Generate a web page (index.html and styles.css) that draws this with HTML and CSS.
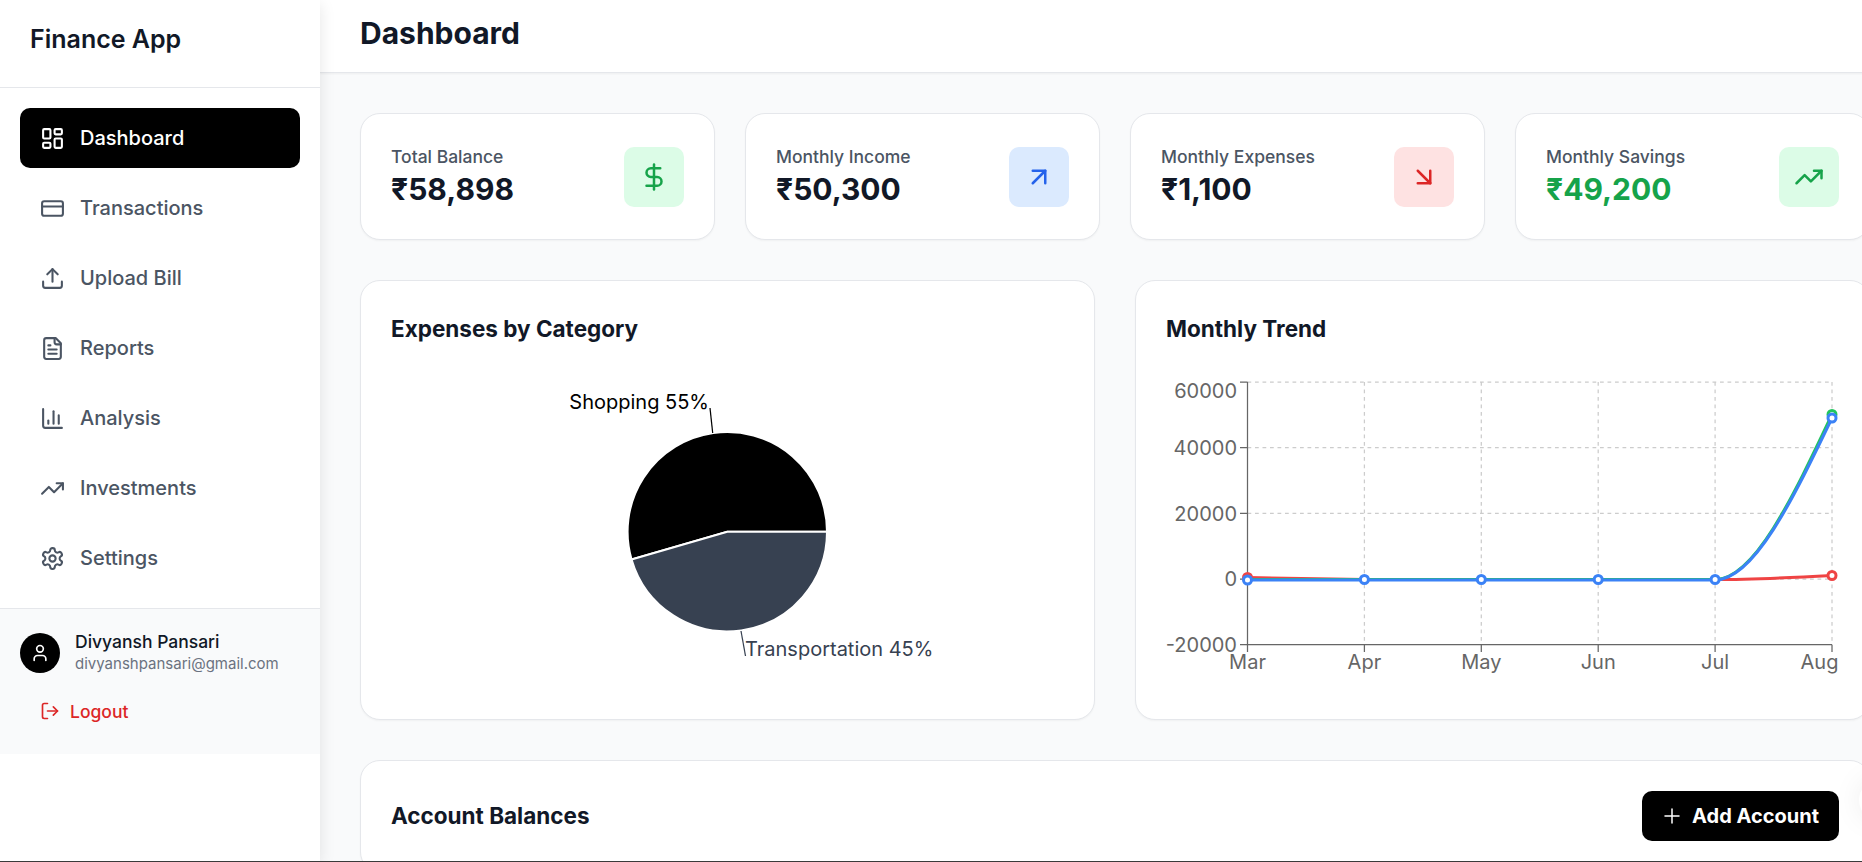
FILE: index.html
```html
<!DOCTYPE html>
<html lang="en">
<head>
    <meta charset="UTF-8">
    <meta name="viewport" content="width=device-width, initial-scale=1.0">
    <title>Finance App</title>
    <link rel="stylesheet" href="styles.css">
</head>
<body>
<div class="app">

    <aside class="sidebar">
        <div class="brand">Finance App</div>
        <nav class="nav">
            <a class="nav-item active">
                <svg class="icon nav-icon" viewBox="0 0 24 24"><rect x="3" y="3" width="7" height="9" rx="1"/><rect x="14" y="3" width="7" height="5" rx="1"/><rect x="14" y="12" width="7" height="9" rx="1"/><rect x="3" y="16" width="7" height="5" rx="1"/></svg>
                Dashboard
            </a>
            <a class="nav-item">
                <svg class="icon nav-icon" viewBox="0 0 24 24"><rect x="2" y="5" width="20" height="14" rx="2"/><path d="M2 10h20"/></svg>
                Transactions
            </a>
            <a class="nav-item">
                <svg class="icon nav-icon" viewBox="0 0 24 24"><path d="M21 15v4a2 2 0 0 1-2 2H5a2 2 0 0 1-2-2v-4"/><path d="M17 8l-5-5-5 5"/><path d="M12 3v12"/></svg>
                Upload Bill
            </a>
            <a class="nav-item">
                <svg class="icon nav-icon" viewBox="0 0 24 24"><path d="M15 2H6a2 2 0 0 0-2 2v16a2 2 0 0 0 2 2h12a2 2 0 0 0 2-2V7Z"/><path d="M14 2v4a2 2 0 0 0 2 2h4"/><path d="M10 9H8"/><path d="M16 13H8"/><path d="M16 17H8"/></svg>
                Reports
            </a>
            <a class="nav-item">
                <svg class="icon nav-icon" viewBox="0 0 24 24"><path d="M3 3v16a2 2 0 0 0 2 2h16"/><path d="M18 17V9"/><path d="M13 17V5"/><path d="M8 17v-3"/></svg>
                Analysis
            </a>
            <a class="nav-item">
                <svg class="icon nav-icon" viewBox="0 0 24 24"><path d="M22 7l-8.5 8.5-5-5L2 17"/><path d="M16 7h6v6"/></svg>
                Investments
            </a>
            <a class="nav-item">
                <svg class="icon nav-icon" viewBox="0 0 24 24"><path d="M12.22 2h-.44a2 2 0 0 0-2 2v.18a2 2 0 0 1-1 1.73l-.43.25a2 2 0 0 1-2 0l-.15-.08a2 2 0 0 0-2.73.73l-.22.38a2 2 0 0 0 .73 2.73l.15.1a2 2 0 0 1 1 1.72v.51a2 2 0 0 1-1 1.74l-.15.09a2 2 0 0 0-.73 2.73l.22.38a2 2 0 0 0 2.73.73l.15-.08a2 2 0 0 1 2 0l.43.25a2 2 0 0 1 1 1.73V20a2 2 0 0 0 2 2h.44a2 2 0 0 0 2-2v-.18a2 2 0 0 1 1-1.73l.43-.25a2 2 0 0 1 2 0l.15.08a2 2 0 0 0 2.73-.73l.22-.39a2 2 0 0 0-.73-2.73l-.15-.08a2 2 0 0 1-1-1.74v-.5a2 2 0 0 1 1-1.74l.15-.09a2 2 0 0 0 .73-2.73l-.22-.38a2 2 0 0 0-2.73-.73l-.15.08a2 2 0 0 1-2 0l-.43-.25a2 2 0 0 1-1-1.73V4a2 2 0 0 0-2-2z"/><circle cx="12" cy="12" r="3"/></svg>
                Settings
            </a>
        </nav>
        <div class="account">
            <div class="user">
                <div class="avatar">
                    <svg class="icon small-icon" viewBox="0 0 24 24"><path d="M19 21v-2a4 4 0 0 0-4-4H9a4 4 0 0 0-4 4v2"/><circle cx="12" cy="7" r="4"/></svg>
                </div>
                <div class="user-text">
                    <div class="user-name">Divyansh Pansari</div>
                    <div class="user-email">divyanshpansari@gmail.com</div>
                </div>
            </div>
            <a class="logout">
                <svg class="icon small-icon" viewBox="0 0 24 24"><path d="M9 21H5a2 2 0 0 1-2-2V5a2 2 0 0 1 2-2h4"/><path d="M16 17l5-5-5-5"/><path d="M21 12H9"/></svg>
                Logout
            </a>
        </div>
    </aside>

    <main class="main">
        <header class="topbar">
            <h1>Dashboard</h1>
        </header>

        <div class="content">
            <section class="stats">
                <div class="card stat">
                    <div>
                        <p class="stat-label">Total Balance</p>
                        <p class="stat-value">₹58,898</p>
                    </div>
                    <div class="stat-icon tint-green">
                        <svg class="icon stat-svg" viewBox="0 0 24 24"><path d="M12 2v20"/><path d="M17 5H9.5a3.5 3.5 0 0 0 0 7h5a3.5 3.5 0 0 1 0 7H6"/></svg>
                    </div>
                </div>
                <div class="card stat">
                    <div>
                        <p class="stat-label">Monthly Income</p>
                        <p class="stat-value">₹50,300</p>
                    </div>
                    <div class="stat-icon tint-blue">
                        <svg class="icon stat-svg" viewBox="0 0 24 24"><path d="M7 7h10v10"/><path d="M7 17L17 7"/></svg>
                    </div>
                </div>
                <div class="card stat">
                    <div>
                        <p class="stat-label">Monthly Expenses</p>
                        <p class="stat-value">₹1,100</p>
                    </div>
                    <div class="stat-icon tint-red">
                        <svg class="icon stat-svg" viewBox="0 0 24 24"><path d="M7 7l10 10"/><path d="M17 7v10H7"/></svg>
                    </div>
                </div>
                <div class="card stat">
                    <div>
                        <p class="stat-label">Monthly Savings</p>
                        <p class="stat-value positive">₹49,200</p>
                    </div>
                    <div class="stat-icon tint-green">
                        <svg class="icon stat-svg" viewBox="0 0 24 24"><path d="M22 7l-8.5 8.5-5-5L2 17"/><path d="M16 7h6v6"/></svg>
                    </div>
                </div>
            </section>

            <section class="charts">
                <div class="card chart-card">
                    <h2>Expenses by Category</h2>
                    <svg class="chart" viewBox="391 347 673 342">
                        <path class="slice" fill="#000000" d="M727.3 531.7L827 531.7A99.7 99.7 0 1 0 631.56 559.5Z"/>
                        <path class="slice" fill="#374151" d="M727.3 531.7L631.56 559.5A99.7 99.7 0 0 0 827 531.7Z"/>
                        <path class="leader" stroke="#000000" d="M712.7 433L710 408"/>
                        <path class="leader" stroke="#374151" d="M741 631L745.5 656"/>
                        <text class="pie-label" x="709" y="409" text-anchor="end" fill="#000000">Shopping 55%</text>
                        <text class="pie-label" x="745" y="656" fill="#374151">Transportation 45%</text>
                    </svg>
                </div>

                <div class="card chart-card">
                    <h2>Monthly Trend</h2>
                    <svg class="chart" viewBox="1166 347 673 342">
                        <g class="grid">
                            <path d="M1247.5 382H1832"/>
                            <path d="M1247.5 447.7H1832"/>
                            <path d="M1247.5 513.4H1832"/>
                            <path d="M1247.5 579.1H1832"/>
                            <path d="M1364.4 382V644.7"/>
                            <path d="M1481.3 382V644.7"/>
                            <path d="M1598.2 382V644.7"/>
                            <path d="M1715.1 382V644.7"/>
                            <path d="M1832 382V644.7"/>
                        </g>
                        <g class="axis">
                            <path d="M1247.5 382V644.7H1832"/>
                            <path d="M1240 382H1247.5M1240 447.7H1247.5M1240 513.4H1247.5M1240 579.1H1247.5M1240 644.7H1247.5"/>
                            <path d="M1247.5 644.7V652M1364.4 644.7V652M1481.3 644.7V652M1598.2 644.7V652M1715.1 644.7V652M1832 644.7V652"/>
                        </g>
                        <g class="tick-label" text-anchor="end">
                            <text x="1237" y="398">60000</text>
                            <text x="1237" y="455">40000</text>
                            <text x="1237" y="521">20000</text>
                            <text x="1237" y="586">0</text>
                            <text x="1237" y="652">-20000</text>
                        </g>
                        <g class="tick-label" text-anchor="middle">
                            <text x="1247.5" y="669">Mar</text>
                            <text x="1364.4" y="669">Apr</text>
                            <text x="1481.3" y="669">May</text>
                            <text x="1598.2" y="669">Jun</text>
                            <text x="1715.1" y="669">Jul</text>
                            <text x="1819.5" y="669">Aug</text>
                        </g>
                        <g class="series" stroke="#ef4444">
                            <path d="M1247.5 577.5C1286 578 1325 579 1364.4 579.5H1715.1C1754 579.5 1793 577.5 1832 575.5"/>
                            <circle cx="1247.5" cy="577.5" r="4"/>
                            <circle cx="1832" cy="575.5" r="4"/>
                        </g>
                        <g class="series" stroke="#22c55e">
                            <path d="M1247.5 579.5H1715.1C1754 579.5 1793 497 1832 414.5"/>
                            <circle cx="1832" cy="414.5" r="4"/>
                        </g>
                        <g class="series" stroke="#3b82f6">
                            <path d="M1247.5 580H1364.4H1715.1C1754 580 1793 499 1832 418"/>
                            <circle cx="1247.5" cy="580" r="4"/>
                            <circle cx="1364.4" cy="579.5" r="4"/>
                            <circle cx="1481.3" cy="579.5" r="4"/>
                            <circle cx="1598.2" cy="579.5" r="4"/>
                            <circle cx="1715.1" cy="579.5" r="4"/>
                            <circle cx="1832" cy="418" r="4"/>
                        </g>
                    </svg>
                </div>
            </section>

            <section class="card balances">
                <h2>Account Balances</h2>
                <button class="add-button">
                    <svg class="icon add-icon" viewBox="0 0 24 24"><path d="M5 12h14"/><path d="M12 5v14"/></svg>
                    Add Account
                </button>
            </section>
        </div>
    </main>

    <div class="floating-dot"></div>
</div>
</body>
</html>
```

FILE: styles.css
```css
html, body {
    height: 100%;
}

body {
    margin: 0;
    background-color: #3a3a3a;
    font-family: Inter, "Noto Sans", sans-serif;
    color: #111827;
    overflow: hidden;
}

p, h1, h2 {
    margin: 0;
}

.app {
    position: relative;
    display: flex;
    height: 861px;
    overflow: hidden;
    background-color: #f9fafb;
}

.icon {
    fill: none;
    stroke: currentColor;
    stroke-width: 2;
    stroke-linecap: round;
    stroke-linejoin: round;
    flex: none;
}

/* sidebar */
.sidebar {
    position: relative;
    z-index: 2;
    display: flex;
    flex-direction: column;
    flex: none;
    width: 320px;
    background-color: #fff;
    box-shadow: 0 4px 15px rgba(0, 0, 0, 0.1);
}

.brand {
    height: 87px;
    padding-left: 30px;
    border-bottom: 1px solid #e5e7eb;
    font-size: 25px;
    font-weight: 600;
    line-height: 79px;
}

.nav {
    display: flex;
    flex-direction: column;
    gap: 10px;
    padding: 20px;
}

.nav-item {
    display: flex;
    align-items: center;
    gap: 15px;
    height: 60px;
    padding: 0 20px;
    border-radius: 10px;
    font-size: 20px;
    font-weight: 500;
    color: #4b5563;
}

.nav-item.active {
    background-color: #000;
    color: #fff;
}

.nav-icon {
    width: 25px;
    height: 25px;
}

.small-icon {
    width: 20px;
    height: 20px;
}

.account {
    padding: 22px 20px 23px;
    border-top: 1px solid #e5e7eb;
    background-color: #f9fafb;
}

.user {
    display: flex;
    align-items: center;
    gap: 15px;
}

.user-text {
    padding-top: 1px;
}

.avatar {
    display: flex;
    align-items: center;
    justify-content: center;
    width: 40px;
    height: 40px;
    border-radius: 50%;
    background-color: #000;
    color: #fff;
}

.user-name {
    font-size: 17.5px;
    font-weight: 500;
    line-height: 20px;
}

.user-email {
    margin-top: 2px;
    font-size: 15px;
    line-height: 20px;
    color: #6b7280;
}

.logout {
    display: flex;
    align-items: center;
    gap: 10px;
    height: 40px;
    margin-top: 17px;
    padding-left: 20px;
    font-size: 17.5px;
    font-weight: 500;
    color: #dc2626;
}

/* main area is wider than the window, the right side gets cut off */
.main {
    flex: none;
    width: 1590px;
}

.topbar {
    height: 72px;
    padding-left: 40px;
    border-bottom: 1px solid #e5e7eb;
    background-color: #fff;
    box-shadow: 0 1px 2px rgba(0, 0, 0, 0.05);
}

.topbar h1 {
    font-size: 30px;
    font-weight: 700;
    line-height: 66px;
}

.content {
    padding: 40px;
}

.card {
    border: 1px solid #e5e7eb;
    border-radius: 20px;
    background-color: #fff;
    box-shadow: 0 1px 2px rgba(0, 0, 0, 0.04);
}

.stats {
    display: grid;
    grid-template-columns: repeat(4, 1fr);
    gap: 30px;
    margin-bottom: 40px;
}

.stat {
    display: flex;
    align-items: center;
    justify-content: space-between;
    padding: 32.5px 30px;
}

.stat-label {
    font-size: 17.5px;
    font-weight: 500;
    line-height: 20px;
    color: #4b5563;
}

.stat-value {
    margin-top: 4px;
    font-size: 30px;
    font-weight: 700;
    line-height: 36px;
}

.positive {
    color: #16a34a;
}

.stat-icon {
    display: flex;
    align-items: center;
    justify-content: center;
    width: 60px;
    height: 60px;
    border-radius: 10px;
}

.stat-svg {
    width: 30px;
    height: 30px;
}

.tint-green {
    background-color: #dcfce7;
    color: #16a34a;
}

.tint-blue {
    background-color: #dbeafe;
    color: #2563eb;
}

.tint-red {
    background-color: #fee2e2;
    color: #dc2626;
}

.charts {
    display: grid;
    grid-template-columns: repeat(2, 1fr);
    gap: 40px;
    margin-bottom: 40px;
}

.chart-card {
    height: 440px;
    box-sizing: border-box;
    padding: 30px;
}

h2 {
    font-size: 22.5px;
    font-weight: 700;
    line-height: 36px;
}

.chart {
    display: block;
    width: 673px;
    height: 342px;
    overflow: visible;
}

.slice {
    stroke: #fff;
    stroke-width: 2;
}

.leader {
    fill: none;
    stroke-width: 1.25;
}

.pie-label,
.tick-label {
    font-size: 20px;
}

.tick-label {
    fill: #666;
}

.grid path {
    fill: none;
    stroke: #ccc;
    stroke-width: 1.25;
    stroke-dasharray: 3.75 3.75;
}

.axis path {
    fill: none;
    stroke: #666;
    stroke-width: 1.25;
}

.series path {
    fill: none;
    stroke-width: 3;
}

.series circle {
    fill: #fff;
    stroke-width: 3;
}

.balances {
    display: flex;
    align-items: center;
    justify-content: space-between;
    padding: 30px;
}

.add-button {
    display: flex;
    align-items: center;
    gap: 8px;
    height: 50px;
    padding: 0 20px 0 18px;
    border: none;
    border-radius: 10px;
    background-color: #000;
    color: #fff;
    font-family: inherit;
    font-size: 20px;
    font-weight: 700;
}

.add-icon {
    width: 24px;
    height: 24px;
    stroke-width: 1.5;
}

/* round thing peeking in at the right edge */
.floating-dot {
    position: absolute;
    left: 1859px;
    top: 780px;
    width: 40px;
    height: 40px;
    border-radius: 50%;
    background-color: #fff;
    box-shadow: 0 0 30px rgba(0, 0, 0, 0.08);
}
```
